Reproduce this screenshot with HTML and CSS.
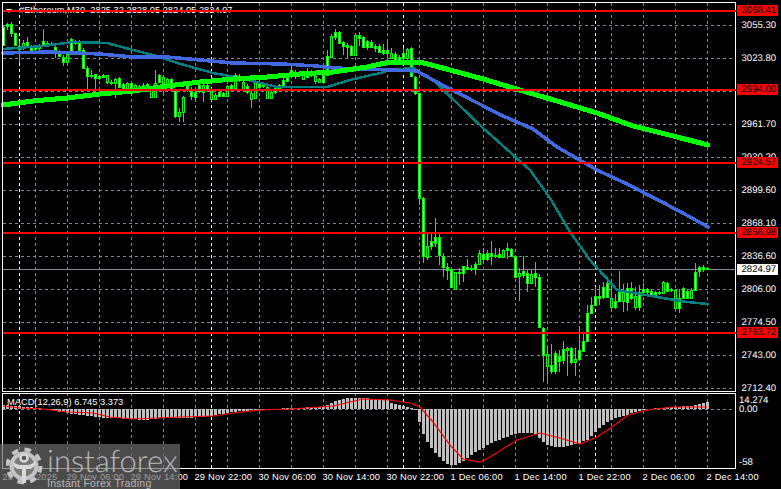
FILE: index.html
```html
<!DOCTYPE html>
<html lang="en">

<head>
  <meta charset="UTF-8">
  <title>Ethereum M30</title>
  <link rel="stylesheet" href="styles.css">
</head>

<body>
  <div class="terminal">
    <!-- chart panes -->
    <div class="panes">
      <svg id="chart" class="chart" width="736" height="469" viewBox="0 0 736 469"></svg>
      <div class="title">
        <span class="title-arrow"></span>
        <span>#Ethereum,M30&nbsp; 2825.32 2828.05 2824.05 2824.97</span>
      </div>
      <div class="macd-title">MACD(12,26,9) 6.745 3.373</div>
      <!-- level lines run over the title -->
      <svg id="levels" class="levels" width="736" height="469" viewBox="0 0 736 469"></svg>
    </div>

    <!-- right hand scale -->
    <div class="scale">
      <div class="price-axis">
        <div>3055.30</div>
        <div>3023.80</div>
        <div>2992.30</div>
        <div>2961.70</div>
        <div>2930.20</div>
        <div>2899.60</div>
        <div>2868.10</div>
        <div>2836.60</div>
        <div>2806.00</div>
        <div>2774.50</div>
        <div>2743.00</div>
        <div>2712.40</div>
        <div class="tag" style="top: 5px">3068.41</div>
        <div class="tag" style="top: 84px">2994.00</div>
        <div class="tag" style="top: 157px">2924.57</div>
        <div class="tag" style="top: 227px">2858.98</div>
        <div class="tag tag-current" style="top: 264px">2824.97</div>
        <div class="tag" style="top: 327px">2763.72</div>
      </div>
      <div class="macd-axis">
        <div>14.274</div>
        <div>0.00</div>
        <div class="macd-low">-58</div>
      </div>
    </div>

    <!-- time scale -->
    <div class="time-axis">
      <div>28 Nov 2025</div>
      <div>29 Nov 06:00</div>
      <div>29 Nov 14:00</div>
      <div>29 Nov 22:00</div>
      <div>30 Nov 06:00</div>
      <div>30 Nov 14:00</div>
      <div>30 Nov 22:00</div>
      <div>1 Dec 06:00</div>
      <div>1 Dec 14:00</div>
      <div>1 Dec 22:00</div>
      <div>2 Dec 06:00</div>
      <div>2 Dec 14:00</div>
    </div>

    <!-- watermark -->
    <div class="logo">
      <svg class="gear" width="37" height="41" viewBox="0 0 37 41">
        <circle class="gear-teeth" cx="18" cy="20" r="16.5"></circle>
        <circle class="gear-ring" cx="18" cy="20" r="12.5"></circle>
        <circle class="gear-head" cx="18" cy="12" r="3.5"></circle>
        <path class="gear-body" d="M7 19 C10 24 14 23 16 23 L16 37 L20 37 L20 23 C22 23 26 24 29 19 L29 15 C26 19 23 19 18 19 C13 19 10 19 7 15 Z"></path>
      </svg>
      <div class="logo-text">
        <div class="logo-name">instaforex</div>
        <div class="logo-tag">Instant Forex Trading</div>
      </div>
    </div>
  </div>

  <script src="chart.js"></script>
</body>

</html>
```

FILE: styles.css
```css
* {
  box-sizing: border-box;
}

body {
  margin: 0;
  background-color: #000;
  color: #fff;
  font-family: "Liberation Sans", Arial, sans-serif;
  font-size: 9.3px;
  overflow: hidden;
}

.terminal {
  position: relative;
  display: grid;
  grid-template-columns: 736px 45px;
  grid-template-rows: 469px 20px;
  width: 781px;
  height: 489px;
}

.panes {
  position: relative;
}

.chart {
  display: block;
}

.levels {
  position: absolute;
  top: 0;
  left: 0;
}

.title {
  position: absolute;
  top: 5px;
  left: 6px;
  display: flex;
  align-items: center;
  gap: 7px;
  line-height: 11px;
  white-space: nowrap;
}

.title-arrow {
  width: 0;
  height: 0;
  border-left: 3.5px solid transparent;
  border-right: 3.5px solid transparent;
  border-top: 4px solid #fff;
}

.macd-title {
  position: absolute;
  top: 397px;
  left: 7px;
  line-height: 11px;
  white-space: nowrap;
}

.price-axis {
  position: relative;
  height: 393px;
  padding: 8.5px 0 0 5.5px;
  font-size: 9.6px;
  line-height: 33px;
  text-rendering: geometricPrecision;
}

.tag {
  position: absolute;
  left: 1px;
  width: 41px;
  height: 11px;
  padding-left: 4.5px;
  background-color: #f00;
  color: #000;
  line-height: 11px;
}

.tag-current {
  background-color: #fff;
  color: #000;
}

.macd-axis {
  display: flex;
  flex-direction: column;
  height: 76px;
  padding: 2.5px 0 0 3px;
  font-size: 9.6px;
  line-height: 9px;
  text-rendering: geometricPrecision;
}

.macd-low {
  margin-top: 44px;
}

.time-axis {
  grid-column: 1 / 3;
  display: flex;
  padding-left: 2.5px;
  line-height: 16px;
  letter-spacing: 0.2px;
  white-space: nowrap;
}

.time-axis div {
  flex: 0 0 64px;
}

.logo {
  position: absolute;
  left: 0;
  top: 444px;
  display: flex;
  gap: 4px;
  width: 180px;
  height: 45px;
  padding: 2px 0 0 6px;
  background-color: rgba(107, 107, 107, 0.7);
  color: #b8b8b8;
}

.gear-teeth {
  fill: none;
  stroke: #c4c4c4;
  stroke-width: 4px;
  stroke-dasharray: 6.5 6.46;
}

.gear-ring {
  fill: #7a7a7a;
  stroke: #c4c4c4;
  stroke-width: 4px;
}

.gear-head {
  fill: #555;
  stroke: #d8d8d8;
  stroke-width: 2.5px;
}

.gear-body {
  fill: #d8d8d8;
}

.logo-name {
  margin-top: -3px;
  font-family: Lato, sans-serif;
  font-size: 31px;
  font-weight: 300;
  line-height: 35px;
  text-rendering: geometricPrecision;
}

.logo-tag {
  margin-top: -1px;
  font-size: 10.5px;
  line-height: 12px;
  letter-spacing: 0.25px;
}

/* chart drawing */
.grid {
  stroke: #778899;
  stroke-width: 1;
  stroke-dasharray: 3 3;
  shape-rendering: crispEdges;
}

.grid-day {
  stroke: #fff;
}

.frame {
  fill: none;
  stroke: #fff;
  stroke-width: 1;
  shape-rendering: crispEdges;
}

.price-line {
  stroke: #7f8894;
  stroke-width: 1;
  shape-rendering: crispEdges;
}

.level {
  stroke: #f00;
  stroke-width: 2;
  shape-rendering: crispEdges;
}

.candles rect,
.bars rect {
  shape-rendering: crispEdges;
}

.candle {
  fill: #0f0;
}

.up {
  fill: #fff;
}

.down {
  fill: #000;
}

.bars rect {
  fill: #c0c0c0;
}

.ma {
  fill: none;
  stroke-linejoin: round;
  stroke-linecap: round;
  shape-rendering: crispEdges;
}

.ma-slow {
  stroke: #0f0;
  stroke-width: 5;
}

.ma-mid {
  stroke: #4169e1;
  stroke-width: 3.5;
}

.ma-fast {
  stroke: #008080;
  stroke-width: 2.5;
}

.signal {
  fill: none;
  stroke: #f00;
  stroke-width: 1.2;
}
```

FILE: chart.js
```js
// candles: x starts at 3 and steps by 4. [high, body top, body bottom, low, white body]
var candles = [
  [25,27,45,45,1],[23,24,26,30,1],[22,24,33,37,1],[33,33,45,45,1],[41,46,49,63,1],
  [40,43,48,50,0],[37,42,46,48,1],[45,46,50,51,1],[45,46,49,51,1],[44,47,48,52,1],
  [29,41,45,47,1],[41,43,44,46,1],[42,44,45,46,1],[45,47,52,58,1],[50,51,56,56,1],
  [55,57,62,66,1],[54,54,62,65,0],[38,39,52,52,1],[40,41,43,45,1],[40,42,50,52,1],
  [48,50,68,68,1],[66,68,76,89,1],[70,75,76,78,1],[74,74,78,89,1],[75,76,78,80,1],
  [74,75,77,78,1],[75,75,82,84,0],[80,82,83,85,1],[78,79,83,98,0],[77,78,87,88,1],
  [83,84,88,89,1],[82,83,88,90,0],[82,83,88,90,1],[84,85,89,91,0],[85,86,89,91,0],
  [83,85,88,90,1],[83,84,88,90,1],[88,90,97,97,0],[70,83,97,97,0],[74,75,82,83,1],
  [76,77,83,93,0],[78,79,83,88,0],[78,79,89,91,1],[89,89,116,118,1],[108,112,116,122,0],
  [96,97,112,122,0],[85,86,89,92,1],[87,91,96,100,1],[90,92,97,101,1],[83,85,91,93,1],
  [84,85,92,102,0],[84,85,90,92,1],[88,91,99,101,0],[93,95,99,99,0],[90,92,96,97,1],
  [92,93,96,97,1],[85,86,96,96,0],[84,85,90,92,1],[73,75,88,88,0],[74,76,80,82,1],
  [80,82,89,92,0],[84,86,92,94,1],[90,93,99,108,0],[82,82,98,98,0],[76,83,87,90,1],
  [84,85,86,88,1],[85,87,98,99,0],[90,92,98,98,0],[86,88,92,94,1],[84,85,88,90,1],
  [78,80,86,88,1],[76,77,81,82,1],[66,70,75,78,1],[70,73,76,79,1],[71,72,75,77,1],
  [73,75,79,80,0],[68,72,77,78,1],[70,72,75,77,1],[74,76,81,84,0],[78,79,82,83,0],
  [70,75,82,83,1],[50,56,75,76,1],[34,36,57,58,0],[29,32,37,40,1],[31,32,43,44,1],
  [41,42,46,55,1],[43,45,47,58,1],[45,46,55,55,1],[34,35,55,55,0],[32,35,38,46,1],
  [36,37,47,48,1],[40,41,47,50,1],[40,42,47,48,1],[44,46,48,52,1],[44,46,52,53,1],
  [44,50,53,55,1],[41,50,53,58,1],[48,53,58,58,0],[52,54,59,60,1],[55,57,60,62,1],
  [48,53,58,60,1],[48,49,58,60,0],[47,48,76,76,1],[76,77,93,95,1],[93,93,198,205,1],
  [197,198,256,263,1],[233,246,257,260,0],[234,241,246,250,1],[218,237,243,247,1],[232,237,255,265,1],
  [253,256,267,277,1],[263,267,270,280,1],[269,269,287,288,1],[272,272,289,290,0],[268,272,273,285,1],
  [266,266,273,282,1],[259,267,269,270,1],[265,268,269,271,1],[262,264,269,275,1],[250,253,264,265,0],
  [248,254,259,262,1],[250,253,259,261,1],[241,253,256,265,1],[248,255,256,258,1],[248,254,257,258,1],
  [249,250,257,258,0],[243,248,250,259,1],[248,249,256,257,1],[256,256,277,277,1],[268,273,276,301,0],
  [256,271,275,278,1],[270,273,283,292,1],[269,274,283,284,0],[262,273,277,287,1],[274,277,327,328,1],
  [327,328,355,382,1],[345,354,366,382,0],[344,365,371,374,1],[351,353,371,374,1],[350,356,361,372,1],
  [341,349,360,364,1],[347,348,350,376,0],[347,348,362,364,1],[348,359,362,376,0],[326,350,359,361,1],
  [333,341,351,352,1],[305,313,341,342,1],[297,305,313,314,1],[287,296,305,306,1],[285,296,298,305,1],
  [282,287,297,299,1],[277,283,297,298,1],[288,298,307,312,0],[294,301,307,309,1],[271,292,301,302,1],
  [284,292,301,312,0],[283,288,302,311,1],[282,288,298,300,1],[287,296,307,310,0],[285,292,307,311,1],
  [283,289,292,293,1],[288,289,292,294,1],[290,291,296,297,1],[291,292,296,297,1],[291,292,293,295,1],
  [281,282,293,294,0],[282,283,291,292,1],[288,289,290,292,1],[289,290,308,310,0],[289,298,308,313,1],
  [287,288,298,299,1],[289,291,298,299,1],[288,290,298,299,0],[263,272,290,291,1],[266,267,271,277,1],
  [265,267,269,272,1],[267,268,269,270,1]
];

var slowMa = "3,105 33,101 67,98 100,94 133,91 167,86 200,82 233,79 267,77 300,74 333,72 367,67 390,62 420,62 450,70 483,79 523,91 557,101 597,113 633,126 673,136 708,145";
var midMa = "3,53 50,52 100,54 133,57 167,57 200,60 233,63 283,64 317,66 333,68 367,69 390,70 417,71 433,80 450,89 503,116 533,129 557,147 597,170 627,184 683,213 708,227";
var fastMa = "3,49 43,46 73,42 107,43 133,50 157,56 177,63 213,73 240,78 277,87 327,87 350,80 380,73 390,70 413,68 433,80 483,128 530,170 550,198 570,232 590,260 617,290 657,297 687,302 708,304";
var signal = "3,406 20,408 43,409 67,412 93,413 110,417 133,419 157,418 180,417 213,416 233,413 260,410 290,409 320,407 333,406 363,399 390,400 410,403 420,407 433,422 450,445 463,459 480,462 490,457 517,440 540,433 560,438 580,444 597,437 612,427 628,415 647,410 673,407 707,407";

// macd histogram, [x, height above zero]
var macd = [
  [3,4],[11,3],[27,2],[43,0],[55,-2],[67,-4],[87,-7],[107,-9],[131,-10],[143,-11],[163,-9],[187,-9],
  [211,-7],[227,-4],[243,-2],[259,-1],[275,0],[291,1],[323,2],[331,6],[339,9],[347,11],[363,11],[387,9],
  [391,6],[403,3],[411,1],[415,-1],[419,-13],[423,-25],[427,-33],[431,-39],[435,-44],[439,-48],[443,-52],
  [447,-55],[451,-56],[455,-56],[459,-54],[463,-52],[467,-49],[471,-46],[475,-43],[483,-39],[491,-34],
  [499,-31],[507,-28],[515,-25],[523,-24],[531,-24],[535,-25],[543,-33],[547,-36],[555,-38],[563,-38],
  [571,-36],[579,-34],[587,-31],[595,-23],[603,-16],[611,-11],[619,-8],[627,-6],[635,-3],[643,-1],[651,0],
  [659,1],[675,2],[691,3],[703,6],[707,7]
];

var levels = [10.5, 90, 162.5, 232.5, 332.5];
var dayLines = [19, 211, 403, 595];

function macdHeight(x) {
  for (var i = 1; i < macd.length; i++) {
    if (x <= macd[i][0]) {
      var a = macd[i - 1], b = macd[i];
      return a[1] + (b[1] - a[1]) * (x - a[0]) / (b[0] - a[0]);
    }
  }
  return macd[macd.length - 1][1];
}

var html = "";

// grid
for (var y = 25; y <= 388; y += 33) {
  html += `<line class="grid" x1="3" x2="735" y1="${y + 0.5}" y2="${y + 0.5}"></line>`;
}
html += `<line class="grid" x1="3" x2="735" y1="409.5" y2="409.5"></line>`;

for (var x = 35; x <= 707; x += 32) {
  html += `<line class="grid" x1="${x + 0.5}" x2="${x + 0.5}" y1="3" y2="468"></line>`;
}
dayLines.forEach(function (x) {
  html += `<line class="grid grid-day" x1="${x + 0.5}" x2="${x + 0.5}" y1="3" y2="468"></line>`;
});

html += `<line class="price-line" x1="3" x2="735" y1="269.5" y2="269.5"></line>`;

// histogram
html += `<g class="bars">`;
for (var x = 3; x <= 707; x += 4) {
  var h = Math.round(macdHeight(x));
  if (h != 0) {
    html += `<rect x="${x - 1}" y="${h > 0 ? 409 - h : 409}" width="3" height="${Math.abs(h)}"></rect>`;
  }
}
html += `</g>`;

// candles
html += `<g class="candles">`;
candles.forEach(function (c, i) {
  var x = 3 + i * 4;
  html += `<rect class="candle" x="${x}" y="${c[0]}" width="1" height="${c[3] - c[0]}"></rect>`;
  html += `<rect class="candle" x="${x - 1}" y="${c[1]}" width="3" height="${c[2] - c[1] + 1}"></rect>`;
  if (c[2] - c[1] > 1) {
    html += `<rect class="${c[4] ? "up" : "down"}" x="${x}" y="${c[1] + 1}" width="1" height="${c[2] - c[1] - 1}"></rect>`;
  }
});
html += `</g>`;

// moving averages
html += `<polyline class="ma ma-fast" points="${fastMa}"></polyline>`;
html += `<polyline class="ma ma-mid" points="${midMa}"></polyline>`;
html += `<polyline class="ma ma-slow" points="${slowMa}"></polyline>`;
html += `<polyline class="signal" points="${signal}"></polyline>`;

// frames
html += `<rect class="frame" x="2.5" y="2.5" width="733" height="389"></rect>`;
html += `<rect class="frame" x="2.5" y="393.5" width="733" height="75"></rect>`;

document.getElementById("chart").innerHTML = html;

var lines = "";
levels.forEach(function (y) {
  lines += `<line class="level" x1="3" x2="736" y1="${y}" y2="${y}"></line>`;
});
document.getElementById("levels").innerHTML = lines;
```
